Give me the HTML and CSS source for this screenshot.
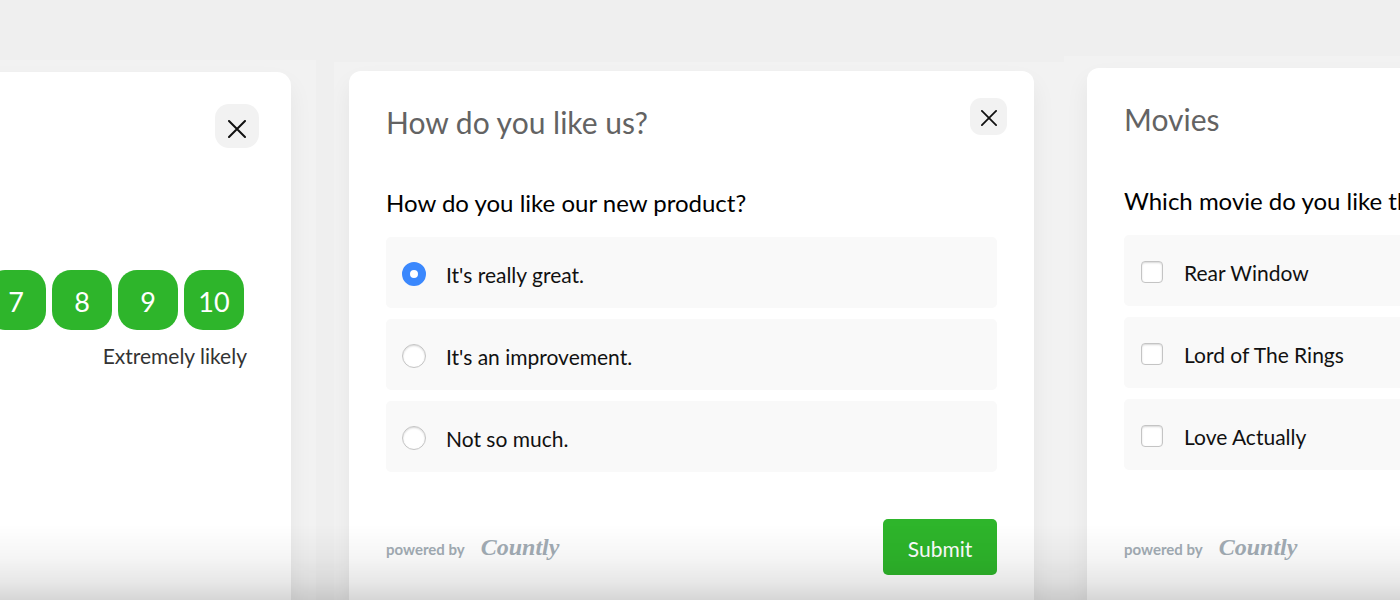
FILE: index.html
```
<!DOCTYPE html>
<html lang="en">
<head>
<meta charset="utf-8">
<meta name="viewport" content="width=device-width, initial-scale=1">
<title>Countly surveys</title>
<link rel="stylesheet" href="styles.css">
</head>
<body>
<main class="stage">
  <section class="frame frame-rating">
    <div class="card card-rating">
      <button class="close close-large" type="button" aria-label="Close">
        <svg viewBox="0 0 18 18"><path d="M1 1 17 17M17 1 1 17"/></svg>
      </button>
      <div class="scale">
        <button class="score" type="button">7</button>
        <button class="score" type="button">8</button>
        <button class="score" type="button">9</button>
        <button class="score" type="button">10</button>
      </div>
      <p class="scale-label">Extremely likely</p>
    </div>
  </section>

  <section class="frame frame-product">
    <form class="card">
      <header class="head">
        <h2 class="title">How do you like us?</h2>
        <button class="close" type="button" aria-label="Close">
          <svg viewBox="0 0 18 18"><path d="M1 1 17 17M17 1 1 17"/></svg>
        </button>
      </header>
      <fieldset class="options">
        <legend class="question">How do you like our new product?</legend>
        <label class="option"><input class="radio" type="radio" name="product" checked>It's really great.</label>
        <label class="option"><input class="radio" type="radio" name="product">It's an improvement.</label>
        <label class="option"><input class="radio" type="radio" name="product">Not so much.</label>
      </fieldset>
      <footer class="foot">
        <span class="powered">powered by</span>
        <span class="brand">Countly</span>
        <button class="submit" type="submit">Submit</button>
      </footer>
    </form>
  </section>

  <section class="frame frame-movies">
    <form class="card">
      <header class="head">
        <h2 class="title">Movies</h2>
      </header>
      <fieldset class="options">
        <legend class="question">Which movie do you like the most?</legend>
        <label class="option"><input class="check" type="checkbox">Rear Window</label>
        <label class="option"><input class="check" type="checkbox">Lord of The Rings</label>
        <label class="option"><input class="check" type="checkbox">Love Actually</label>
      </fieldset>
      <footer class="foot">
        <span class="powered">powered by</span>
        <span class="brand">Countly</span>
      </footer>
    </form>
  </section>
</main>
<div class="fade"></div>
</body>
</html>
```
FILE: styles.css
```
* {
  box-sizing: border-box;
}

body {
  margin: 0;
  background: #efefef;
  color: #111;
  font-family: Lato, "Liberation Sans", sans-serif;
}

button {
  border: 0;
  font: inherit;
  cursor: pointer;
}

.stage {
  display: grid;
  grid-template-columns: minmax(0, 334fr) minmax(0, 730fr) minmax(0, 336fr);
  min-height: 100vh;
  overflow: hidden;
}

.frame {
  display: flex;
  background: #f2f2f2;
  overflow: hidden;
  min-width: 0;
}

.frame-rating {
  justify-content: flex-end;
  margin: 60px 18px 0 0;
  padding: 12px 25px 0 0;
}

.frame-product {
  margin-top: 62px;
  padding: 9px 30px 0 15px;
}

.frame-movies {
  margin-top: 56px;
  padding: 12px 0 0 23px;
}

.card {
  flex: 1 0 auto;
  padding: 27px 37px 0;
  background: #fff;
  border-radius: 12px 12px 0 0;
  box-shadow: 0 12px 24px rgba(0, 0, 0, 0.06);
}

.frame-movies .card {
  flex: none;
  width: 685px;
}

.card-rating {
  flex: none;
  display: flex;
  flex-direction: column;
  align-items: flex-end;
  padding: 32px 32px 0;
  border-radius: 14px 14px 0 0;
}

.head {
  display: flex;
  align-items: flex-start;
  justify-content: space-between;
  margin-right: -10px;
}

.title {
  margin: 4px 0 0;
  color: #636363;
  font-size: 30px;
  font-weight: 400;
  line-height: 40px;
}

.close {
  display: flex;
  align-items: center;
  justify-content: center;
  width: 37px;
  height: 37px;
  padding: 3px 0 0;
  border-radius: 11px;
  background: #f2f2f2;
}

.close svg {
  width: 16px;
  fill: none;
  stroke: #111;
  stroke-width: 2;
  stroke-linecap: round;
}

.close-large {
  width: 44px;
  height: 44px;
  padding-top: 5px;
  border-radius: 14px;
}

.close-large svg {
  width: 18px;
}

.scale {
  display: flex;
  gap: 6px;
  margin: 122px 15px 0 0;
}

.score {
  width: 60px;
  height: 60px;
  padding: 3px 0 0;
  border-radius: 19px;
  background: #2eb52b;
  color: #fff;
  font-size: 27px;
}

.scale-label {
  margin: 12px 12px 0 0;
  color: #333;
  font-size: 21px;
  line-height: 28px;
}

.options {
  display: flex;
  flex-direction: column;
  gap: 11px;
  min-width: 0;
  margin: 45px 0 0;
  padding: 0;
  border: 0;
}

.frame-movies .options {
  margin-top: 46px;
}

.question {
  margin-bottom: 18px;
  padding: 0;
  color: #000;
  font-size: 24px;
  line-height: 32px;
  white-space: nowrap;
}

.option {
  display: flex;
  align-items: center;
  gap: 20px;
  height: 71px;
  padding: 3px 16px 0;
  border-radius: 5px;
  background: #f9f9f9;
  font-size: 21px;
}

.radio,
.check {
  appearance: none;
  flex: none;
  margin: 0;
  border: 1px solid #c4c4c4;
  background: #fff;
  box-shadow: inset 0 1px 2px rgba(0, 0, 0, 0.16);
}

.radio {
  width: 24px;
  height: 24px;
  border-radius: 50%;
}

.radio:checked {
  border: 8px solid #3b88fd;
  box-shadow: none;
}

.check {
  width: 22px;
  height: 22px;
  margin: 0 1px;
  border-radius: 4px;
}

.foot {
  display: flex;
  align-items: center;
  height: 56px;
  margin-top: 47px;
}

.frame-movies .foot {
  margin-top: 49px;
}

.powered {
  padding-top: 4px;
  color: #a3adb5;
  font-size: 15px;
  font-weight: 700;
}

.brand {
  margin-left: 16px;
  color: #a3adb5;
  font-family: "Liberation Serif", serif;
  font-size: 24px;
  font-style: italic;
  font-weight: 700;
}

.submit {
  width: 114px;
  height: 56px;
  margin-left: auto;
  padding: 3px 0 0;
  border-radius: 5px;
  background: #2eb52b;
  color: #fff;
  font-size: 21px;
}

.fade {
  position: fixed;
  right: 0;
  bottom: 0;
  left: 0;
  height: 76px;
  background: linear-gradient(rgba(0, 0, 0, 0), rgba(0, 0, 0, 0.04) 45%, rgba(0, 0, 0, 0.09) 75%, rgba(0, 0, 0, 0.16));
  pointer-events: none;
}
```
